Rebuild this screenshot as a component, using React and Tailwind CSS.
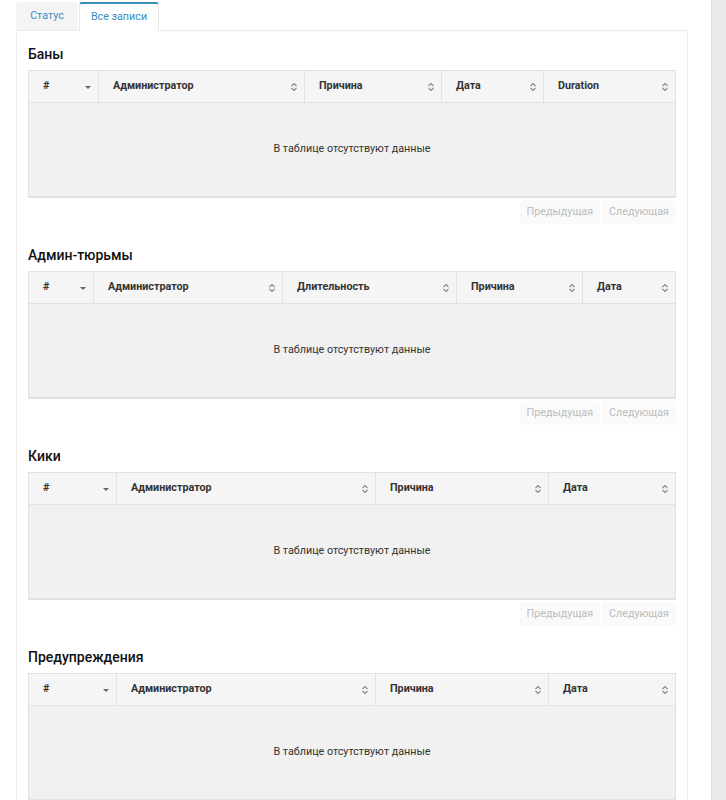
import React from 'react';

const sections = [
  {
    title: 'Баны',
    cols: [
      { name: '#', w: 'w-[69px]', sorted: true },
      { name: 'Администратор', w: 'w-[206px]' },
      { name: 'Причина', w: 'w-[137px]' },
      { name: 'Дата', w: 'w-[102px]' },
      { name: 'Duration', w: 'flex-1' },
    ],
  },
  {
    title: 'Админ-тюрьмы',
    cols: [
      { name: '#', w: 'w-[64px]', sorted: true },
      { name: 'Администратор', w: 'w-[189px]' },
      { name: 'Длительность', w: 'w-[174px]' },
      { name: 'Причина', w: 'w-[126px]' },
      { name: 'Дата', w: 'flex-1' },
    ],
  },
  {
    title: 'Кики',
    cols: [
      { name: '#', w: 'w-[87px]', sorted: true },
      { name: 'Администратор', w: 'w-[259px]' },
      { name: 'Причина', w: 'w-[173px]' },
      { name: 'Дата', w: 'flex-1' },
    ],
  },
  {
    title: 'Предупреждения',
    cols: [
      { name: '#', w: 'w-[87px]', sorted: true },
      { name: 'Администратор', w: 'w-[259px]' },
      { name: 'Причина', w: 'w-[173px]' },
      { name: 'Дата', w: 'flex-1' },
    ],
  },
];

function SortIcon({ sorted }) {
  if (sorted) {
    return (
      <svg width="8" height="8" viewBox="0 0 8 8" className="shrink-0">
        <path d="M1 3h6L4 6z" fill="#666" />
      </svg>
    );
  }
  return (
    <svg width="8" height="10" viewBox="0 0 8 10" className="shrink-0">
      <path d="M1.5 4L4 1.5 6.5 4M1.5 6L4 8.5 6.5 6" fill="none" stroke="#888" strokeWidth="1.2" />
    </svg>
  );
}

function Section({ title, cols }) {
  return (
    <div className="pb-[20px]">
      <h3 className="text-[14px] leading-[22px] font-medium text-[#111] mb-[5px]">{title}</h3>
      <div className="border border-[#e2e2e2] border-b-2">
        <div className="flex h-[32px] bg-[#f5f5f5] border-b border-[#e2e2e2]">
          {cols.map((c, i) => (
            <div
              key={c.name}
              className={`${c.w} flex items-center justify-between pl-[14px] pr-[6px] text-[10.75px] font-bold text-[#333] ${i > 0 ? 'border-l border-[#e2e2e2]' : ''}`}
            >
              <span>{c.name}</span>
              <SortIcon sorted={c.sorted} />
            </div>
          ))}
        </div>
        <div className="h-[93px] bg-[#f1f1f1] flex items-center justify-center text-[10.75px] text-[#333]">
          В таблице отсутствуют данные
        </div>
      </div>
      <div className="flex justify-end gap-[2px] mt-[2px]">
        <button className="h-[24px] px-[7px] rounded-[3px] bg-[#fafafa] text-[10.75px] text-[#bcbcbc]">Предыдущая</button>
        <button className="h-[24px] px-[7px] rounded-[3px] bg-[#fafafa] text-[10.75px] text-[#bcbcbc]">Следующая</button>
      </div>
    </div>
  );
}

export default function App() {
  return (
    <div className="flex h-[800px] overflow-hidden bg-white font-['Roboto',sans-serif]">
      <div className="w-[711px] pl-[16px] pr-[23px] pt-[1px]">
        <div className="flex h-[29px] items-end">
          <div className="h-[28px] w-[62px] bg-[#f4f4f4] rounded-t-[3px] flex items-center justify-center text-[10.75px] text-[#3c8dbc]">
            Статус
          </div>
          <div className="h-[29px] w-[80px] ml-px bg-white border-t-[2px] border-x border-[#e8e8e8] border-t-[#3c8dbc] rounded-t-[3px] flex items-center justify-center text-[10.75px] text-[#3c8dbc] -mb-px relative z-10">
            Все записи
          </div>
        </div>
        <div className="border border-[#ececec] px-[11px] pt-[12px]">
          {sections.map((s) => (
            <Section key={s.title} {...s} />
          ))}
        </div>
      </div>
      <div className="w-[15px] bg-[#e9e9ec] border-l border-[#dcdce0]" />
    </div>
  );
}
